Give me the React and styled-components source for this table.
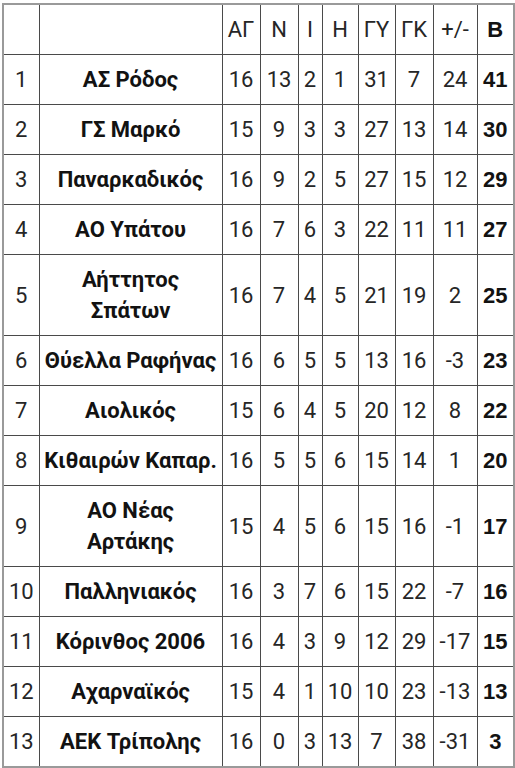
import React from 'react';
import styled, { createGlobalStyle } from 'styled-components';

const GlobalStyle = createGlobalStyle`
  html, body {
    margin: 0;
    padding: 0;
    background: #ffffff;
  }
  body {
    font-family: Roboto, "Liberation Sans", sans-serif;
    color: #222;
  }
`;

const Wrapper = styled.div`
  padding: 3px 2px 0 2px;
`;

const Table = styled.table`
  width: 511px;
  border-collapse: collapse;
  table-layout: fixed;
  border: 2px solid #9a9a9a;
`;

const Cell = styled.td`
  border: 1px solid #4a4a4a;
  padding: 9px ${props => (props.team ? '4px' : '1px')};
  line-height: 31px;
  font-size: 22px;
  text-align: center;
  vertical-align: middle;
  color: #262626;
  font-weight: ${props => (props.bold ? 700 : 400)};
  ${props => props.team && 'color: #121212;'}
  ${props => props.points && 'font-family: "Liberation Sans", Arial, sans-serif; color: #121212;'}
`;

const HeadCell = styled(Cell).attrs({ as: 'th' })`
  font-weight: ${props => (props.points ? 700 : 400)};
`;

const columns = [
  { key: 'pos', label: '', width: 36 },
  { key: 'team', label: '', width: 183 },
  { key: 'ag', label: 'ΑΓ', width: 38 },
  { key: 'n', label: 'Ν', width: 38 },
  { key: 'i', label: 'Ι', width: 24 },
  { key: 'h', label: 'Η', width: 36 },
  { key: 'gy', label: 'ΓΥ', width: 37 },
  { key: 'gk', label: 'ΓΚ', width: 38 },
  { key: 'diff', label: '+/-', width: 44 },
  { key: 'b', label: 'Β', width: 37 }
];

const rows = [
  [1, 'ΑΣ Ρόδος', 16, 13, 2, 1, 31, 7, 24, 41],
  [2, 'ΓΣ Μαρκό', 15, 9, 3, 3, 27, 13, 14, 30],
  [3, 'Παναρκαδικός', 16, 9, 2, 5, 27, 15, 12, 29],
  [4, 'ΑΟ Υπάτου', 16, 7, 6, 3, 22, 11, 11, 27],
  [5, 'Αήττητος Σπάτων', 16, 7, 4, 5, 21, 19, 2, 25],
  [6, 'Θύελλα Ραφήνας', 16, 6, 5, 5, 13, 16, -3, 23],
  [7, 'Αιολικός', 15, 6, 4, 5, 20, 12, 8, 22],
  [8, 'Κιθαιρών Καπαρ.', 16, 5, 5, 6, 15, 14, 1, 20],
  [9, 'ΑΟ Νέας Αρτάκης', 15, 4, 5, 6, 15, 16, -1, 17],
  [10, 'Παλληνιακός', 16, 3, 7, 6, 15, 22, -7, 16],
  [11, 'Κόρινθος 2006', 16, 4, 3, 9, 12, 29, -17, 15],
  [12, 'Αχαρναϊκός', 15, 4, 1, 10, 10, 23, -13, 13],
  [13, 'ΑΕΚ Τρίπολης', 16, 0, 3, 13, 7, 38, -31, 3]
];

export default function App() {
  return (
    <Wrapper>
      <GlobalStyle />
      <Table>
        <colgroup>
          {columns.map(col => (
            <col key={col.key} style={{ width: col.width }} />
          ))}
        </colgroup>
        <thead>
          <tr>
            {columns.map(col => (
              <HeadCell key={col.key} points={col.key === 'b'}>
                {col.label}
              </HeadCell>
            ))}
          </tr>
        </thead>
        <tbody>
          {rows.map(row => (
            <tr key={row[0]}>
              {row.map((value, index) => (
                <Cell
                  key={columns[index].key}
                  bold={index === 1 || index === 9}
                  team={index === 1}
                  points={index === 9}
                >
                  {value}
                </Cell>
              ))}
            </tr>
          ))}
        </tbody>
      </Table>
    </Wrapper>
  );
}
